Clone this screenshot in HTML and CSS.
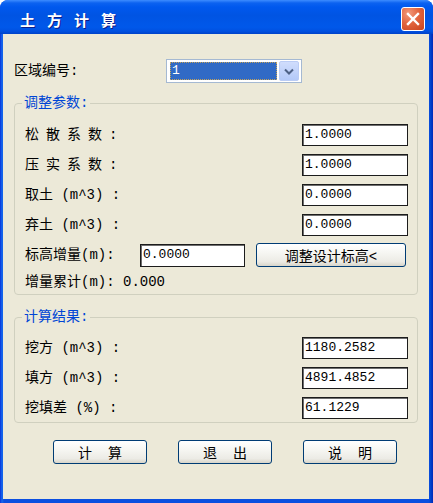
FILE: index.html
```html
<!DOCTYPE html>
<html lang="zh-CN">

<head>
    <meta charset="utf-8">
    <title>土方计算</title>
    <link rel="stylesheet" href="styles.css">
</head>

<body>
    <div class="window">
        <div class="titlebar">
            <span class="title">土方计算</span>
            <button class="close" aria-label="关闭">
                <svg width="14" height="14" viewBox="0 0 14 14">
                    <path d="M2 2 L12 12 M12 2 L2 12" stroke="#fff" stroke-width="2.4" stroke-linecap="square" />
                </svg>
            </button>
        </div>

        <div class="client">
            <div class="zone-row">
                <span class="zone-label">区域编号:</span>
                <div class="combo">
                    <div class="combo-value">1</div>
                    <div class="combo-btn">
                        <svg width="10" height="7" viewBox="0 0 10 7">
                            <path d="M1 1.5 L5 5.5 L9 1.5" fill="none" stroke="#4D6185" stroke-width="2" />
                        </svg>
                    </div>
                </div>
            </div>

            <!-- 调整参数 -->
            <fieldset class="group group-params">
                <legend>调整参数:</legend>
                <div class="row">
                    <span class="label"><span class="spaced">松散系数</span>:</span>
                    <div class="field">1.0000</div>
                </div>
                <div class="row">
                    <span class="label"><span class="spaced">压实系数</span>:</span>
                    <div class="field">1.0000</div>
                </div>
                <div class="row">
                    <span class="label">取土 (m^3) :</span>
                    <div class="field">0.0000</div>
                </div>
                <div class="row">
                    <span class="label">弃土 (m^3) :</span>
                    <div class="field">0.0000</div>
                </div>
                <div class="row row-height">
                    <span class="label-short">标高增量(m):</span>
                    <div class="field field-short">0.0000</div>
                    <button class="btn btn-adjust">调整设计标高&lt;</button>
                </div>
                <div class="row-sum">增量累计(m): 0.000</div>
            </fieldset>

            <!-- 计算结果 -->
            <fieldset class="group group-result">
                <legend>计算结果:</legend>
                <div class="row">
                    <span class="label">挖方 (m^3) :</span>
                    <div class="field">1180.2582</div>
                </div>
                <div class="row">
                    <span class="label">填方 (m^3) :</span>
                    <div class="field">4891.4852</div>
                </div>
                <div class="row">
                    <span class="label">挖填差 (%) :</span>
                    <div class="field">61.1229</div>
                </div>
            </fieldset>

            <div class="actions">
                <button class="btn btn-main"><span>计算</span></button>
                <button class="btn btn-main"><span>退出</span></button>
                <button class="btn btn-main"><span>说明</span></button>
            </div>
        </div>
    </div>
</body>

</html>
```

FILE: styles.css
```css
body {
    margin: 0;
    background-color: #FFFFFF;
}

.window {
    width: 433px;
    height: 503px;
    display: flex;
    flex-direction: column;
    background: linear-gradient(to right, #0831D9 0, #166AEE 2px, #0B4FE0 4px, #0B4FE0 429px, #0040C8 431px, #0028B8 433px);
    border-radius: 8px 8px 0 0;
    overflow: hidden;
}

.titlebar {
    height: 34px;
    box-sizing: border-box;
    padding: 4px 8px 0 20px;
    display: flex;
    align-items: center;
    justify-content: space-between;
    background: linear-gradient(to bottom, #3D8CFF 0, #0C62F0 3px, #0058EE 7px, #0054E3 45%, #0058EA 80%, #0050E0 92%, #0042C8 100%);
}

.title {
    color: #FFFFFF;
    font-family: "Noto Sans CJK SC", sans-serif;
    font-weight: bold;
    font-size: 15px;
    letter-spacing: 12px;
    text-shadow: 1px 1px 0 #0A1E8A;
}

.close {
    width: 24px;
    height: 24px;
    padding: 0;
    display: flex;
    align-items: center;
    justify-content: center;
    border: 1px solid #FFFFFF;
    border-radius: 3px;
    background: radial-gradient(circle at 30% 25%, #F29A7C 0, #E2653F 45%, #C9431E 100%);
    box-sizing: border-box;
}

.client {
    flex: 1;
    margin: 0 4px 4px 3px;
    padding: 25px 11px 0 11px;
    background-color: #ECE9D8;
    font-family: "Liberation Mono", "Noto Sans CJK SC", monospace;
    font-size: 14px;
    line-height: 16px;
    color: #000000;
}

/* 区域编号 */

.zone-row {
    display: flex;
    align-items: center;
    height: 24px;
}

.zone-label {
    width: 152px;
}

.combo {
    width: 136px;
    height: 24px;
    box-sizing: border-box;
    border: 1px solid #A5B9D2;
    background-color: #FFFFFF;
    padding: 0 2px 0 3px;
    display: flex;
    align-items: center;
    gap: 2px;
}

.combo-value {
    width: 107px;
    height: 18px;
    box-sizing: border-box;
    border: 1px dotted #C4A25A;
    background-color: #316AC5;
    color: #FFFFFF;
    font-size: 13px;
    line-height: 16px;
    padding-left: 1px;
}

.combo-btn {
    width: 20px;
    height: 20px;
    box-sizing: border-box;
    border: 1px solid #BACCF5;
    border-radius: 2px;
    background: linear-gradient(to bottom, #D0DDFC, #B3C9F8);
    display: flex;
    align-items: center;
    justify-content: center;
}

/* gruppebokse */

.group {
    margin: 12px 0 0;
    border: 1px solid #D0D0BF;
    border-radius: 4px;
    padding: 13px 9px 4px 10px;
}

.group legend {
    color: #0046D5;
    padding: 0 2px;
    margin-left: -3px;
    line-height: 16px;
}

.group-result {
    margin-top: 14px;
    padding-top: 12px;
    padding-bottom: 3px;
}

.row {
    display: flex;
    align-items: center;
    justify-content: space-between;
    height: 22px;
    margin-bottom: 8px;
}

.group-result .row:last-child {
    margin-bottom: 0;
}

.spaced {
    letter-spacing: 7px;
}

.field {
    width: 106px;
    height: 22px;
    box-sizing: border-box;
    border: 1px solid #1C1C1C;
    box-shadow: inset 1px 1px 0 #6E6E6E;
    background-color: #FFFFFF;
    font-family: "Liberation Mono", monospace;
    font-size: 13px;
    line-height: 20px;
    padding-left: 2px;
}

.row-height {
    height: 24px;
    margin-top: -1px;
    margin-bottom: 7px;
    justify-content: flex-start;
}

.label-short {
    width: 115px;
}

.field-short {
    width: 105px;
    height: 23px;
}

.btn {
    height: 24px;
    box-sizing: border-box;
    border: 1px solid #003C74;
    border-radius: 3px;
    background: linear-gradient(to bottom, #FFFFFF 0, #F6F6F2 40%, #ECEBE5 80%, #D8D5CA 100%);
    font-family: "Liberation Mono", "Noto Sans CJK SC", monospace;
    font-size: 14px;
    color: #000000;
    padding: 0;
}

.btn-adjust {
    width: 150px;
    margin-left: 11px;
}

.row-sum {
    height: 16px;
}

/* knapper */

.actions {
    display: flex;
    gap: 31px;
    padding-left: 39px;
    margin-top: 17px;
}

.btn-main {
    width: 94px;
}

.btn-main span {
    letter-spacing: 16px;
    margin-right: -16px;
}
```
